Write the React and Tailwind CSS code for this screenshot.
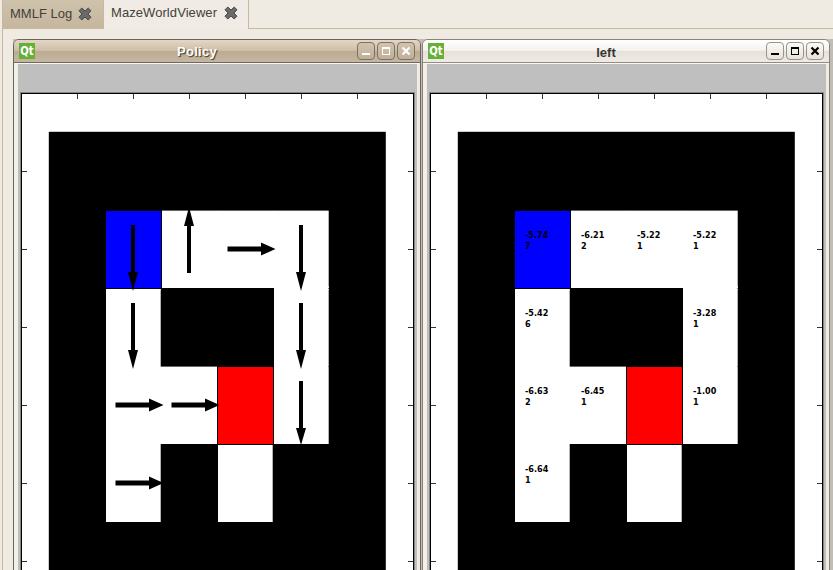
import React from "react";

const TICKS_X = [77, 133, 189, 245, 301, 357];
const TICKS_Y = [171, 249, 327, 405, 483, 561];

// Free cells of the maze: x, y, width, height
const FREE = [
  [106, 210, 223, 78],
  [106, 288, 55, 234],
  [160, 366, 58, 78],
  [274, 288, 55, 156],
  [218, 444, 55, 78],
];

const ARROWS = [
  ["down", 133, 225],
  ["down", 133, 303],
  ["up", 189, 273],
  ["right", 228, 249],
  ["down", 301, 225],
  ["down", 301, 303],
  ["down", 301, 381, 64],
  ["right", 116, 405],
  ["right", 172, 405],
  ["right", 116, 483],
];

const VALUES = [
  [116, 238, "-5.74", "7"],
  [172, 238, "-6.21", "2"],
  [228, 238, "-5.22", "1"],
  [284, 238, "-5.22", "1"],
  [116, 316, "-5.42", "6"],
  [284, 316, "-3.28", "1"],
  [116, 394, "-6.63", "2"],
  [172, 394, "-6.45", "1"],
  [284, 394, "-1.00", "1"],
  [116, 472, "-6.64", "1"],
];

function Arrow({ dir, x, y, len }) {
  if (dir === "right") {
    const tip = x + (len || 47.5);
    return <path d={`M${x - 0.5} ${y - 2.6}H${x + 33}V${y - 6.5}L${tip} ${y}L${x + 33} ${y + 6.5}V${y + 2.6}H${x - 0.5}Z`} />;
  }
  const s = dir === "up" ? -1 : 1;
  const tip = y + s * (len || 66);
  const neck = y + s * 47;
  return <path d={`M${x - 2} ${y}V${neck}H${x - 5}L${x} ${tip}L${x + 5} ${neck}H${x + 2}V${y}Z`} />;
}

function Maze({ kind }) {
  return (
    <svg width="399" height="506" viewBox="18 64 399 506" className="block shrink-0">
      <rect x="18" y="64" width="399" height="506" fill="#bfbfbf" />
      <rect x="21" y="93" width="393" height="500" fill="#000" />
      <rect x="22" y="94" width="391" height="499" fill="#fff" />
      <path d="M20.5 93V570M20 92.5H414.5V570" fill="none" stroke="#858585" strokeWidth="1" />
      <g fill="#333">
        {TICKS_X.map((x) => <rect key={x} x={x} y="94" width="1" height="5" />)}
        {TICKS_Y.map((y) => <rect key={y} x="22" y={y} width="5" height="1" />)}
        {TICKS_Y.map((y) => <rect key={y} x="408" y={y} width="5" height="1" />)}
      </g>
      <rect x="48.8" y="131.8" width="337" height="450" fill="#000" />
      {FREE.map(([x, y, w, h]) => (
        <rect key={x + "-" + y} x={x} y={y + 0.6} width={w - 0.3} height={h - 0.6} fill="#fff" />
      ))}
      <rect x="106" y="287.5" width="54.7" height="3" fill="#fff" />
      <rect x="274" y="286" width="54.7" height="4" fill="#fff" />
      <rect x="106" y="210" width="56" height="79" fill="#000" />
      <rect x="106" y="211" width="55" height="77" fill="#00f" />
      <rect x="217" y="366" width="57" height="79" fill="#000" />
      <rect x="218" y="367" width="55" height="77" fill="#f00" />
      <g fill="#777">
        <rect x="217" y="210" width="1" height="1" />
        <rect x="273" y="210" width="1" height="1" />
        <rect x="328" y="288" width="1" height="1" />
        <rect x="328" y="366" width="1" height="1" />
      </g>
      {kind === "policy" &&
        ARROWS.map(([dir, x, y, len]) => <Arrow key={dir + x + y} dir={dir} x={x} y={y} len={len} />)}
      {kind === "values" && (
        <g className="font-['DejaVu_Sans_Condensed','DejaVu_Sans',sans-serif] text-[9px] font-bold [font-stretch:condensed]">
          {VALUES.map(([x, y, v, n]) => (
            <React.Fragment key={x + "-" + y}>
              <text x={x} y={y}>{v}</text>
              <text x={x} y={y + 11}>{n}</text>
            </React.Fragment>
          ))}
        </g>
      )}
    </svg>
  );
}

function CloseMark() {
  return (
    <svg width="14" height="14" viewBox="0 0 14 14" className="shrink-0">
      <path d="M1 3.8L3.8 1L7 4L10.2 1L13 3.8L10 7L13 10.2L10.2 13L7 10L3.8 13L1 10.2L4 7Z" fill="#686b68" stroke="#484b48" strokeWidth="1" strokeLinejoin="round" />
    </svg>
  );
}

function TitleButton({ type, active }) {
  const c = active ? "#fff" : "#000";
  return (
    <div className={`h-[18px] w-[18px] rounded-[4px] border ${active ? "border-[#7d7263] bg-linear-to-b from-[#d2c3ae] to-[#bfb09a]" : "border-[#9b9488] bg-linear-to-b from-[#fbfaf8] to-[#e8e3da]"}`}>
      <svg width="16" height="16" viewBox="0 0 16 16" shapeRendering="crispEdges">
        {type === "min" && <rect x="4" y="10" width="8" height="2" fill={c} />}
        {type === "max" && <path d="M4 4H12V12H4ZM5 6V11H11V6Z" fill={c} fillRule="evenodd" />}
        {type === "close" && (
          <path d="M4.5 4.5L11.5 11.5M11.5 4.5L4.5 11.5" stroke={c} strokeWidth="2.2" shapeRendering="auto" />
        )}
      </svg>
    </div>
  );
}

function Win({ title, active, kind }) {
  return (
    <div className={`flex h-[540px] w-[408px] shrink-0 flex-col overflow-hidden rounded-t-[6px] border bg-[#efebe5] ${active ? "border-[#6b6458]" : "border-[#89837a]"}`}>
      <div className={`flex h-[23px] shrink-0 items-center border-b px-[5px] ${active ? "border-[#70685a] bg-[linear-gradient(#e4d7c6_0,#cebda7_48%,#bbab94_50%,#c6b7a2_100%)]" : "border-[#918b82] bg-[linear-gradient(#fff_0,#f4f1ed_50%,#e6e1d9_52%,#efebe4_100%)]"}`}>
        <svg width="16" height="16" viewBox="0 0 16 16" className="mb-px shrink-0">
          <rect width="16" height="16" fill="#66b036" />
          <text
            x="1.3"
            y="12"
            textLength="13.4"
            lengthAdjust="spacingAndGlyphs"
            fill="#fff"
            className="font-['DejaVu_Sans_Condensed','DejaVu_Sans',sans-serif] text-[13px] font-bold [font-stretch:condensed]"
          >
            Qt
          </text>
        </svg>
        <div className={`flex-1 pl-[2px] text-center text-[13px] leading-none font-bold ${active ? "tracking-[0.3px] text-white [text-shadow:1px_1px_1px_#3b352c]" : "pt-[2px] text-[#393631]"}`}>
          {title}
        </div>
        <div className="flex gap-[2px]">
          <TitleButton type="min" active={active} />
          <TitleButton type="max" active={active} />
          <TitleButton type="close" active={active} />
        </div>
      </div>
      <div className="h-px shrink-0 bg-[#f8f7f5]" />
      <div className="flex border-l-[3px] border-[#f3f0ec] pl-px">
        <Maze kind={kind} />
      </div>
    </div>
  );
}

export default function App() {
  return (
    <div className="flex h-[570px] w-[833px] flex-col overflow-hidden bg-[#efebe3] font-['Liberation_Sans',Arial,sans-serif] text-[#444039]">
      <div className="flex h-[29px] shrink-0 pl-[2px]">
        <div className="flex h-[29px] w-[102px] items-start gap-[5px] border-x border-b border-[#c8b89f] bg-linear-to-b from-[#cfc2ab] to-[#c5b79e] pt-[7px] pl-[7px]">
          <span className="w-[63px] text-[13px] leading-[14px] whitespace-nowrap">MMLF Log</span>
          <CloseMark />
        </div>
        <div className="flex h-[29px] w-[145px] items-start gap-[5px] border-r border-[#c8b89f] bg-[#f0ece5] pt-[6px] pl-[7px]">
          <span className="w-[108px] text-[13px] leading-[14px] tracking-[0.07px] whitespace-nowrap">MazeWorldViewer</span>
          <CloseMark />
        </div>
        <div className="flex-1 border-b border-[#c8b89f]" />
      </div>
      <div className="ml-[2px] flex-1 overflow-hidden border-l border-[#c8b89f] pt-[10px] pl-[10px]">
        <div className="flex h-[531px] gap-px overflow-hidden bg-[#c0bdb7]">
          <Win title="Policy" active kind="policy" />
          <Win title="left" kind="values" />
        </div>
      </div>
    </div>
  );
}
